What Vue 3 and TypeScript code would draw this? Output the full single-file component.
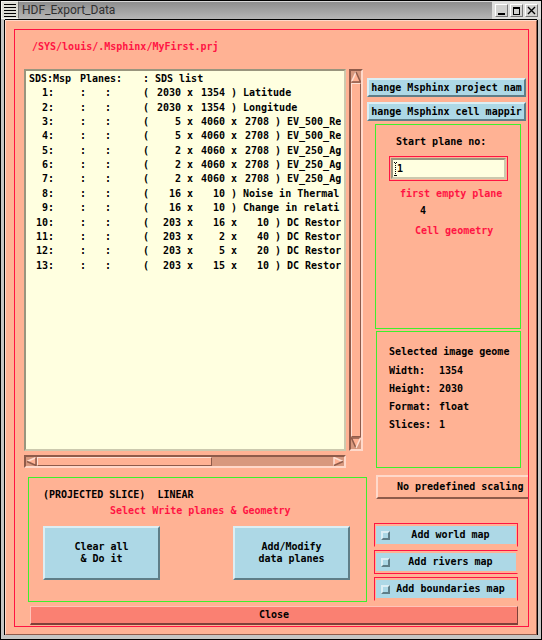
<script setup lang="ts">
import { ref } from 'vue'

interface DataSet {
  id: number
  dims: number[]
  name: string
}

const projectPath = ref('/SYS/louis/.Msphinx/MyFirst.prj')
const startPlane = ref('1')

const dataSets: DataSet[] = [
  { id: 1, dims: [2030, 1354], name: 'Latitude' },
  { id: 2, dims: [2030, 1354], name: 'Longitude' },
  { id: 3, dims: [5, 4060, 2708], name: 'EV_500_Re' },
  { id: 4, dims: [5, 4060, 2708], name: 'EV_500_Re' },
  { id: 5, dims: [2, 4060, 2708], name: 'EV_250_Ag' },
  { id: 6, dims: [2, 4060, 2708], name: 'EV_250_Ag' },
  { id: 7, dims: [2, 4060, 2708], name: 'EV_250_Ag' },
  { id: 8, dims: [16, 10], name: 'Noise in Thermal' },
  { id: 9, dims: [16, 10], name: 'Change in relati' },
  { id: 10, dims: [203, 16, 10], name: 'DC Restor' },
  { id: 11, dims: [203, 2, 40], name: 'DC Restor' },
  { id: 12, dims: [203, 5, 20], name: 'DC Restor' },
  { id: 13, dims: [203, 15, 10], name: 'DC Restor' },
]

const geometry = [
  { label: 'Width:', value: '1354' },
  { label: 'Height:', value: '2030' },
  { label: 'Format:', value: 'float' },
  { label: 'Slices:', value: '1' },
]

const overlays = ref([
  { id: 'world', label: 'Add world map', on: false },
  { id: 'rivers', label: 'Add rivers map', on: false },
  { id: 'bounds', label: 'Add boundaries map', on: false },
])
</script>

<template>
  <div class="window">
    <header class="titlebar">
      <button class="sysmenu" aria-label="Window menu">
        <svg width="12" height="14" viewBox="0 0 12 14" shape-rendering="crispEdges">
          <path d="M0 1.5H12M0 4.5H12M0 7.5H12M0 10.5H12M0 13.5H12" stroke="#000" />
        </svg>
      </button>
      <h1 class="title">HDF_Export_Data</h1>
      <div class="controls">
        <button class="control" aria-label="Minimize">
          <svg width="9" height="9" viewBox="0 0 9 9" shape-rendering="crispEdges">
            <rect x="1" y="7" width="7" height="2" />
          </svg>
        </button>
        <button class="control" aria-label="Maximize">
          <svg width="9" height="9" viewBox="0 0 9 9" shape-rendering="crispEdges">
            <path d="M1 1H8V9H1ZM2 3V8H7V3Z" fill-rule="evenodd" />
          </svg>
        </button>
        <button class="control" aria-label="Close window">
          <svg width="9" height="9" viewBox="0 0 9 9">
            <path d="M1 1L8 8M8 1L1 8" stroke="#000" stroke-width="1.4" />
          </svg>
        </button>
      </div>
    </header>

    <main class="content">
      <section class="frame">
        <p class="path">{{ projectPath }}</p>

        <div class="columns">
          <div class="left">
            <div class="browser">
              <div class="list">
                <table class="sets">
                  <colgroup>
                    <col class="c-id" /><col class="c-gap" /><col class="c-colon" /><col class="c-colon2" />
                    <col class="c-paren" /><col class="c-num" /><col class="c-x" /><col class="c-num" />
                    <col class="c-x" /><col class="c-num" /><col class="c-x" /><col />
                  </colgroup>
                  <thead>
                    <tr>
                      <th colspan="2">SDS:Msp</th>
                      <th colspan="2">Planes:</th>
                      <th>:</th>
                      <th colspan="7">SDS list</th>
                    </tr>
                  </thead>
                  <tbody>
                    <tr v-for="set in dataSets" :key="set.id">
                      <td class="num">{{ set.id }}:</td>
                      <td></td>
                      <td>:</td>
                      <td>:</td>
                      <td>(</td>
                      <template v-for="(dim, i) in set.dims" :key="i">
                        <td class="num">{{ dim }}</td>
                        <td class="mid">{{ i < set.dims.length - 1 ? 'x' : ')' }}</td>
                      </template>
                      <td :colspan="set.dims.length === 2 ? 3 : 1">{{ set.name }}</td>
                    </tr>
                  </tbody>
                </table>
              </div>
              <div class="scroll vertical">
                <button class="arrow" aria-label="Scroll up">
                  <svg width="10" height="12" viewBox="0 0 10 12">
                    <path d="M5 1L9.500 11H.5Z" fill="#ffb294" />
                    <path d="M.5 11L5 1" stroke="#ffe0d4" stroke-width="1.500" />
                    <path d="M5 1L9.500 11H.5" stroke="#8f5b4a" stroke-width="1.500" fill="none" />
                  </svg>
                </button>
                <div class="thumb"></div>
                <button class="arrow" aria-label="Scroll down">
                  <svg width="10" height="12" viewBox="0 0 10 12">
                    <path d="M.5 1H9.500L5 11Z" fill="#ffb294" />
                    <path d="M5 11L.5 1H9.500" stroke="#8f5b4a" stroke-width="1.500" fill="none" />
                    <path d="M9.500 1L5 11" stroke="#ffe0d4" stroke-width="1.500" />
                  </svg>
                </button>
              </div>
              <div class="scroll horizontal">
                <button class="arrow" aria-label="Scroll left">
                  <svg width="11" height="9" viewBox="0 0 11 9">
                    <path d="M10 .5V8.500L1 4.500Z" fill="#ffb294" />
                    <path d="M1 4.500L10 .5" stroke="#ffe0d4" stroke-width="1.500" />
                    <path d="M10 .5V8.500L1 4.500" stroke="#8f5b4a" stroke-width="1.500" fill="none" />
                  </svg>
                </button>
                <div class="track"><div class="thumb"></div></div>
                <button class="arrow" aria-label="Scroll right">
                  <svg width="11" height="9" viewBox="0 0 11 9">
                    <path d="M1 .5L10 4.500L1 8.500Z" fill="#ffb294" />
                    <path d="M1 8.500V.5L10 4.500" stroke="#ffe0d4" stroke-width="1.500" fill="none" />
                    <path d="M10 4.500L1 8.500" stroke="#8f5b4a" stroke-width="1.500" />
                  </svg>
                </button>
              </div>
            </div>

            <section class="panel actions">
              <p>(PROJECTED SLICE)&nbsp; LINEAR</p>
              <p class="hint">Select Write planes &amp; Geometry</p>
              <div class="action-row">
                <button class="raised big">Clear all<br />&amp; Do it</button>
                <button class="raised big">Add/Modify<br />data planes</button>
              </div>
            </section>
          </div>

          <div class="right">
            <div class="commands">
              <button class="raised command">hange Msphinx project nam</button>
              <button class="raised command">hange Msphinx cell mappir</button>
            </div>

            <section class="panel plane">
              <label for="start-plane">Start plane no:</label>
              <div class="field">
                <input id="start-plane" v-model="startPlane" type="text" />
                <svg class="ibeam" width="3" height="14" viewBox="0 0 3 14" shape-rendering="crispEdges">
                  <path d="M0 .5H1M2 .5H3M0 13.500H3" stroke="#000" />
                  <path d="M1.500 1V13" stroke="#000" stroke-dasharray="1 1" />
                </svg>
              </div>
              <p class="note">first empty plane</p>
              <p class="next">4</p>
              <p class="note cell">Cell geometry</p>
            </section>

            <section class="panel geometry">
              <h2>Selected image geome</h2>
              <dl>
                <template v-for="item in geometry" :key="item.label">
                  <dt>{{ item.label }}</dt>
                  <dd>{{ item.value }}</dd>
                </template>
              </dl>
            </section>

            <button class="scaling">No predefined scaling</button>

            <div class="overlays">
              <div v-for="item in overlays" :key="item.id" class="toggle" :class="item.id">
                <label>
                  <input v-model="item.on" type="checkbox" />
                  <span>{{ item.label }}</span>
                </label>
              </div>
            </div>
          </div>
        </div>

        <button class="close">Close</button>
      </section>
    </main>
  </div>
</template>

<style>
body {
  margin: 0;
}
</style>

<style scoped>
* {
  box-sizing: border-box;
}

.window {
  display: flex;
  flex-direction: column;
  min-height: 100vh;
  border: 1px solid #000;
  background: #c6c6c4;
  color: #000;
  font: bold 10px/14px 'DejaVu Sans Mono', monospace;
}

button,
input {
  margin: 0;
  padding: 0;
  border-radius: 0;
  color: inherit;
  font: inherit;
}

p,
h1,
h2,
dl,
dd {
  margin: 0;
  font: inherit;
}

svg {
  display: block;
}

.titlebar {
  display: flex;
  height: 18px;
  background: linear-gradient(#d8d8d8 0, #d8d8d8 1px, #8e8e8e 1px, #b6b6b6 100%);
}

.sysmenu {
  display: grid;
  place-content: center;
  width: 18px;
  border: 1px solid #f4f4f0;
  border-right: 1px solid #707070;
  background: #dcdcd4;
}

.title {
  flex: 1;
  padding-left: 3px;
  color: #303030;
  font: 12px/18px Roboto, 'Liberation Sans', sans-serif;
}

.controls {
  display: flex;
  gap: 2px;
  align-items: center;
  padding: 0 3px;
  background: #dededc;
}

.control {
  display: grid;
  place-content: center;
  width: 13px;
  height: 13px;
  border: 1px solid #fff;
  border-right-color: #777;
  border-bottom-color: #777;
  background: #d2d2d0;
}

.content {
  display: flex;
  flex: 1;
  margin: 1px 4px 4px;
  padding: 8px 7px 7px 8px;
  border: 1px solid #ffd9cb;
  border-right-color: #8f5b4a;
  border-bottom-color: #8f5b4a;
  background: #ffb294;
  box-shadow: -1px 0 #000, 0 -1px #000, 1px 0 #000;
}

.frame {
  display: flex;
  flex: 1;
  flex-direction: column;
  min-width: 0;
  border: 1px solid #ff1443;
  overflow: hidden;
}

.path {
  padding: 10px 0 15px 17px;
  color: #ff1443;
}

.columns {
  display: grid;
  flex: 1;
  grid-template-columns: minmax(0, 1fr) 161px;
}

.left {
  display: flex;
  flex-direction: column;
  gap: 9px;
  padding-left: 9px;
}

.browser {
  display: grid;
  flex: 1;
  grid-template: 1fr 13px / minmax(0, 1fr) 14px;
  gap: 4px 3px;
  padding-right: 4px;
}

.list {
  padding: 1px 3px;
  border: 2px solid #99957e;
  border-right-color: #ccc9ae;
  border-bottom-color: #ccc9ae;
  background: #ffffe0;
  overflow: hidden;
}

.sets {
  width: 100%;
  height: 201px;
  border-collapse: collapse;
  table-layout: fixed;
  white-space: nowrap;
}

.sets th,
.sets td {
  padding: 0;
  overflow: hidden;
  font: inherit;
  text-align: left;
}

.sets .num {
  text-align: right;
}

.sets .mid {
  text-align: center;
}

.c-id {
  width: 25px;
}

.c-gap {
  width: 26px;
}

.c-colon {
  width: 25px;
}

.c-colon2 {
  width: 38px;
}

.c-paren {
  width: 12px;
}

.c-num {
  width: 26px;
}

.c-x {
  width: 18px;
}

.scroll {
  display: flex;
  border: 2px solid #8f5b4a;
  border-right-color: #ffd9cb;
  border-bottom-color: #ffd9cb;
  background: #d8987e;
}

.vertical {
  flex-direction: column;
}

.arrow {
  display: grid;
  flex: none;
  place-content: center;
  border: 0;
  background: none;
}

.vertical .arrow {
  height: 12px;
}

.horizontal .arrow {
  width: 11px;
}

.thumb {
  flex: 1;
  border: 1px solid #ffe0d4;
  border-right-color: #8f5b4a;
  border-bottom-color: #8f5b4a;
  background: #ffb294;
}

.track {
  display: flex;
  flex: 1;
}

.track .thumb {
  flex: none;
  width: 59%;
}

.panel {
  border: 1px solid #3cf02c;
}

.actions {
  margin-left: 4px;
  padding: 10px 16px 21px 14px;
}

.hint {
  padding: 2px 0 8px 67px;
  color: #ff1443;
}

.action-row {
  display: flex;
  justify-content: space-between;
}

.raised {
  border: 2px solid #dceef4;
  border-right-color: #5f7e88;
  border-bottom-color: #5f7e88;
  background: #add8e6;
}

.big {
  width: 117px;
  height: 54px;
  line-height: 12px;
}

.right {
  display: flex;
  flex-direction: column;
  padding-top: 9px;
}

.commands {
  display: grid;
  gap: 5px;
  margin-right: 2px;
}

.command {
  height: 19px;
  line-height: 15px;
  white-space: nowrap;
  overflow: hidden;
}

.plane {
  height: 205px;
  margin: 3px 7px 0 8px;
  padding: 10px 12px 0 13px;
}

.plane label {
  display: block;
  padding-left: 7px;
}

.field {
  position: relative;
  margin-top: 7px;
  padding: 1px;
  border: 1px solid #ff1443;
}

.field input {
  display: block;
  width: 100%;
  height: 21px;
  padding: 0 4px;
  border: 2px solid #99957e;
  border-right-color: #ccc9ae;
  border-bottom-color: #ccc9ae;
  outline: 0;
  background: #ffffe0;
}

.ibeam {
  position: absolute;
  top: 5px;
  left: 4px;
}

.note {
  padding: 6px 0 3px 11px;
  color: #ff1443;
}

.next {
  padding-left: 31px;
}

.cell {
  padding-left: 26px;
}

.geometry {
  height: 137px;
  margin: 2px 7px 0 9px;
  padding: 13px 0 0 12px;
  white-space: nowrap;
}

.geometry dl {
  display: grid;
  grid-template-columns: 50px 1fr;
  padding-top: 3px;
  line-height: 18px;
}

.scaling {
  height: 24px;
  margin: 7px 0 0 9px;
  padding-left: 19px;
  border: 2px solid #ffd9cb;
  border-right: 0;
  border-bottom-color: #8f5b4a;
  background: #ffb294;
  text-align: left;
  white-space: nowrap;
}

.overlays {
  display: grid;
  gap: 3px;
  margin: 24px 10px 0 7px;
}

.toggle {
  padding: 2px 1px;
  border: 1px solid #ff1443;
}

.toggle.world,
.toggle.bounds {
  border-bottom-color: transparent;
}

.toggle.rivers {
  border-right-color: transparent;
}

.toggle label {
  display: flex;
  align-items: center;
  height: 18px;
  padding: 0 5px;
  background: #add8e6;
}

.toggle span {
  flex: 1;
  text-align: center;
  white-space: nowrap;
}

.toggle input {
  flex: none;
  width: 9px;
  height: 9px;
  border: 2px solid #dceef4;
  border-right-color: #5f7e88;
  border-bottom-color: #5f7e88;
  appearance: none;
  background: #add8e6;
}

.close {
  height: 19px;
  margin: 4px 10px 1px 15px;
  border: 1px solid #ffc4b8;
  border-right-color: #7d4039;
  border-bottom: 2px solid #7d4039;
  background: #fa8072;
  line-height: 16px;
}
</style>
